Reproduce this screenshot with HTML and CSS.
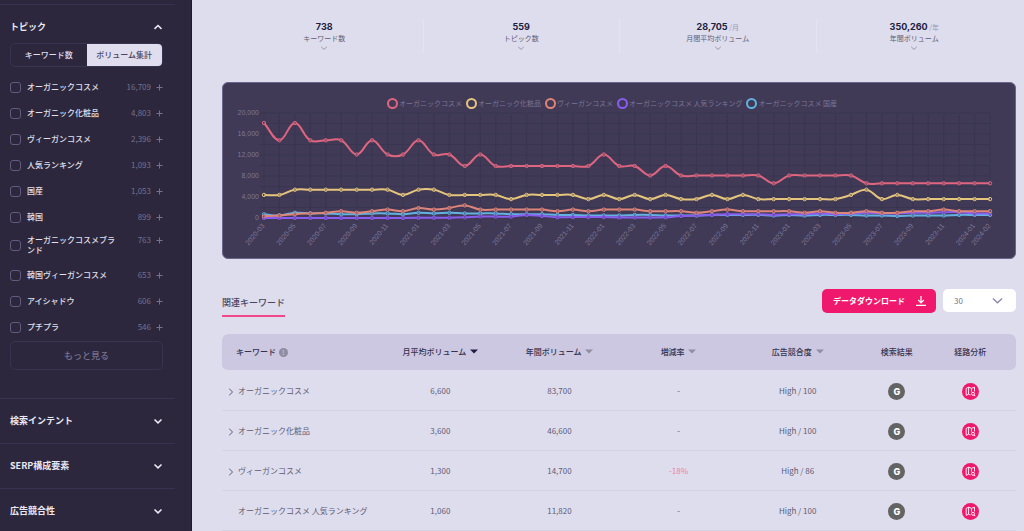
FILE: index.html
```html
<!DOCTYPE html>
<html lang="ja">
<head>
<meta charset="utf-8">
<title>関連キーワード</title>
<link rel="stylesheet" href="styles.css">
</head>
<body>
<svg class="defs" aria-hidden="true">
  <symbol id="down" viewBox="0 0 10 10"><path d="M1.5 3.5 5 6.8 8.5 3.5" fill="none" stroke="currentColor"/></symbol>
  <symbol id="up" viewBox="0 0 10 10"><path d="M1.5 6.8 5 3.5 8.5 6.8" fill="none" stroke="currentColor"/></symbol>
  <symbol id="right" viewBox="0 0 10 10"><path d="M3.2 1.8 6.6 5 3.2 8.2" fill="none" stroke="currentColor"/></symbol>
  <symbol id="plus" viewBox="0 0 7 7"><path d="M3.5 .5v6M.5 3.5h6" fill="none" stroke="currentColor"/></symbol>
  <symbol id="sort" viewBox="0 0 8 5"><path d="M0 .5h8L4 4.5z" fill="currentColor"/></symbol>
  <symbol id="map" viewBox="0 0 17 17">
    <path d="M6.6 4.2 4.2 5.3v7l2.4-1.1zM6.6 4.2l2.9 1.1 3-1.1v4.2M9.5 5.3v3.4M6.6 11.2l1.9.8" fill="none" stroke="#fff" stroke-linejoin="round" stroke-width=".9"/>
    <circle cx="11" cy="10.8" r="1.5" fill="none" stroke="#fff" stroke-width=".9"/>
    <path d="m12.1 11.9 1.2 1.3" stroke="#fff"/>
  </symbol>
</svg>
<div class="app">
  <aside class="sidebar">
    <section class="group group-open">
      <button class="group-head" type="button" aria-expanded="true"><span>トピック</span><svg class="chev"><use href="#up"/></svg></button>
      <div class="tabs">
        <button class="tab" type="button">キーワード数</button>
        <button class="tab tab-on" type="button">ボリューム集計</button>
      </div>
      <ul class="topics">
        <li class="topic"><input type="checkbox" id="t1"><label for="t1">オーガニックコスメ</label><span class="count">16,709</span><button class="plus" type="button" aria-label="追加"><svg><use href="#plus"/></svg></button></li>
        <li class="topic"><input type="checkbox" id="t2"><label for="t2">オーガニック化粧品</label><span class="count">4,803</span><button class="plus" type="button" aria-label="追加"><svg><use href="#plus"/></svg></button></li>
        <li class="topic"><input type="checkbox" id="t3"><label for="t3">ヴィーガンコスメ</label><span class="count">2,396</span><button class="plus" type="button" aria-label="追加"><svg><use href="#plus"/></svg></button></li>
        <li class="topic"><input type="checkbox" id="t4"><label for="t4">人気ランキング</label><span class="count">1,093</span><button class="plus" type="button" aria-label="追加"><svg><use href="#plus"/></svg></button></li>
        <li class="topic"><input type="checkbox" id="t5"><label for="t5">国産</label><span class="count">1,053</span><button class="plus" type="button" aria-label="追加"><svg><use href="#plus"/></svg></button></li>
        <li class="topic"><input type="checkbox" id="t6"><label for="t6">韓国</label><span class="count">899</span><button class="plus" type="button" aria-label="追加"><svg><use href="#plus"/></svg></button></li>
        <li class="topic topic-tall"><input type="checkbox" id="t7"><label for="t7">オーガニックコスメブランド</label><span class="count">763</span><button class="plus" type="button" aria-label="追加"><svg><use href="#plus"/></svg></button></li>
        <li class="topic"><input type="checkbox" id="t8"><label for="t8">韓国ヴィーガンコスメ</label><span class="count">653</span><button class="plus" type="button" aria-label="追加"><svg><use href="#plus"/></svg></button></li>
        <li class="topic"><input type="checkbox" id="t9"><label for="t9">アイシャドウ</label><span class="count">606</span><button class="plus" type="button" aria-label="追加"><svg><use href="#plus"/></svg></button></li>
        <li class="topic"><input type="checkbox" id="t10"><label for="t10">プチプラ</label><span class="count">546</span><button class="plus" type="button" aria-label="追加"><svg><use href="#plus"/></svg></button></li>
      </ul>
      <button class="more" type="button">もっと見る</button>
    </section>
    <section class="group"><button class="group-head" type="button"><span>検索インテント</span><svg class="chev"><use href="#down"/></svg></button></section>
    <section class="group"><button class="group-head" type="button"><span>SERP構成要素</span><svg class="chev"><use href="#down"/></svg></button></section>
    <section class="group"><button class="group-head" type="button"><span>広告競合性</span><svg class="chev"><use href="#down"/></svg></button></section>
  </aside>

  <main class="main">
    <div class="stats">
      <div class="stat"><div class="value"><b>738</b></div><div class="name">キーワード数</div><svg><use href="#down"/></svg></div>
      <div class="stat"><div class="value"><b>559</b></div><div class="name">トピック数</div><svg><use href="#down"/></svg></div>
      <div class="stat"><div class="value"><b>28,705</b> <span>/月</span></div><div class="name">月間平均ボリューム</div><svg><use href="#down"/></svg></div>
      <div class="stat"><div class="value"><b>350,260</b> <span>/年</span></div><div class="name">年間ボリューム</div><svg><use href="#down"/></svg></div>
    </div>

    <section class="chart">
      <ul class="legend">
        <li><i class="ring red"></i>オーガニックコスメ</li>
        <li><i class="ring yellow"></i>オーガニック化粧品</li>
        <li><i class="ring salmon"></i>ヴィーガンコスメ</li>
        <li><i class="ring purple"></i>オーガニックコスメ 人気ランキング</li>
        <li><i class="ring blue"></i>オーガニックコスメ 国産</li>
      </ul>
      <svg id="plot" class="plot" viewBox="0 0 792 149" role="img" aria-label="月別検索ボリューム"></svg>
    </section>

    <div class="toolbar">
      <h2 class="heading">関連キーワード</h2>
      <div class="actions">
        <button class="download" type="button">データダウンロード
          <svg viewBox="0 0 10 10"><path d="M5 0v6.5M2.2 4 5 6.8 7.8 4M0 9.3h10" fill="none" stroke="#fff" stroke-width="1.2"/></svg>
        </button>
        <div class="pager">
          <select aria-label="表示件数"><option>30</option></select>
          <svg><use href="#down"/></svg>
        </div>
      </div>
    </div>

    <table class="table">
      <colgroup><col class="c-key"><col class="c-num"><col class="c-num"><col class="c-num"><col class="c-num"><col class="c-search"><col></colgroup>
      <thead>
        <tr>
          <th class="first">キーワード <span class="info">!</span></th>
          <th>月平均ボリューム <svg class="sort sort-on"><use href="#sort"/></svg></th>
          <th>年間ボリューム <svg class="sort"><use href="#sort"/></svg></th>
          <th>増減率 <svg class="sort"><use href="#sort"/></svg></th>
          <th>広告競合度 <svg class="sort"><use href="#sort"/></svg></th>
          <th>検索結果</th>
          <th class="last">経路分析</th>
        </tr>
      </thead>
      <tbody>
        <tr><td class="key"><button type="button" aria-label="展開"><svg><use href="#right"/></svg></button>オーガニックコスメ</td><td>6,600</td><td>83,700</td><td>-</td><td>High / 100</td><td><a class="dot" href="#">G</a></td><td class="last"><a class="dot pink" href="#" aria-label="経路分析"><svg><use href="#map"/></svg></a></td></tr>
        <tr><td class="key"><button type="button" aria-label="展開"><svg><use href="#right"/></svg></button>オーガニック化粧品</td><td>3,600</td><td>46,600</td><td>-</td><td>High / 100</td><td><a class="dot" href="#">G</a></td><td class="last"><a class="dot pink" href="#" aria-label="経路分析"><svg><use href="#map"/></svg></a></td></tr>
        <tr><td class="key"><button type="button" aria-label="展開"><svg><use href="#right"/></svg></button>ヴィーガンコスメ</td><td>1,300</td><td>14,700</td><td class="minus">-18%</td><td>High / 86</td><td><a class="dot" href="#">G</a></td><td class="last"><a class="dot pink" href="#" aria-label="経路分析"><svg><use href="#map"/></svg></a></td></tr>
        <tr><td class="key leaf">オーガニックコスメ 人気ランキング</td><td>1,060</td><td>11,820</td><td>-</td><td>High / 100</td><td><a class="dot" href="#">G</a></td><td class="last"><a class="dot pink" href="#" aria-label="経路分析"><svg><use href="#map"/></svg></a></td></tr>
      </tbody>
    </table>
  </main>
</div>
<script src="chart.js"></script>
</body>
</html>
```
FILE: styles.css
```css
* { box-sizing: border-box; }
body {
  margin: 0;
  background: #dedded;
  color: #5f5b73;
  font: 8px/12px "Noto Sans CJK JP", sans-serif;
}
button, select, input { font: inherit; color: inherit; margin: 0; }
button { padding: 0; border: 0; background: none; cursor: pointer; }
ul { list-style: none; margin: 0; padding: 0; }
svg { display: block; }
.defs { position: absolute; width: 0; height: 0; }

.app { display: flex; height: 100vh; overflow: hidden; }

/* Sidebar */
.sidebar {
  flex: 0 0 192px;
  padding: 4px 16px 0 0;
  background: #2c273c;
  border-right: 1px solid #1f1a33;
}
.group { padding: 0 12px 0 10px; border-top: 1px solid #383350; }
.group-open { padding-bottom: 28px; }
.group-head {
  display: flex;
  align-items: center;
  justify-content: space-between;
  width: 100%;
  height: 44px;
  color: #eae8f4;
  font-size: 9px;
  font-weight: 700;
}
.group-open .group-head { height: 38px; padding-top: 6px; }
.chev { width: 10px; height: 10px; stroke-width: 1.6; }
.tabs {
  display: flex;
  height: 24px;
  border: 1px solid #383350;
  border-radius: 5px;
  overflow: hidden;
}
.tab { flex: 1; color: #dfddee; font-weight: 500; }
.tab-on { background: #dfddee; color: #4a4560; }
.topics { padding-top: 7px; }
.topic {
  display: flex;
  align-items: baseline;
  padding: 8px 0;
  line-height: 10px;
}
.topic-tall { padding: 5px 0 7px; }
.topic input {
  appearance: none;
  align-self: center;
  flex: none;
  width: 11px;
  height: 11px;
  margin: -1px 6px -1px 0;
  border: 1px solid #625b80;
  border-radius: 3px;
}
.topic label { flex: 1; padding-right: 16px; color: #e2e0ec; font-weight: 500; }
.count { color: #77718f; }
.plus {
  display: flex;
  align-items: center;
  align-self: flex-start;
  height: 10px;
  padding-left: 5px;
  color: #77718f;
}
.plus svg { width: 7px; height: 7px; }
.more {
  width: 100%;
  height: 29px;
  margin-top: 1px;
  border: 1px solid #383350;
  border-radius: 5px;
  color: #77718f;
  font-size: 9px;
  font-weight: 500;
}

/* Summary figures */
.main { flex: 1; min-width: 0; padding: 19px 8px 0 30px; }
.stats { display: grid; grid-template-columns: repeat(4, 1fr); padding: 0 4px; }
.stat {
  display: flex;
  flex-direction: column;
  align-items: center;
  height: 34px;
  padding-top: 2px;
  font-size: 7px;
}
.stat + .stat { border-left: 1px solid #e5e3f2; }
.value { color: #9a96b0; line-height: 12px; }
.value b { color: #221c40; font: 700 9px/12px Inter, sans-serif; }
.name { line-height: 11px; }
.stat svg { width: 8px; height: 8px; color: #88839d; }

/* Chart */
.chart {
  margin-top: 29px;
  padding-top: 14px;
  background: #403a57;
  border: 1px solid #6c658b;
  border-radius: 6px;
}
.legend {
  display: flex;
  justify-content: center;
  gap: 4px;
  padding-right: 14px;
  color: #7b7594;
  font-size: 7px;
}
.legend li { display: flex; align-items: center; gap: 1px; }
.ring { width: 11px; height: 11px; border: 2px solid; border-radius: 50%; }
.ring.red { color: #e06680; }
.ring.yellow { color: #e6c57c; }
.ring.salmon { color: #e08579; }
.ring.purple { color: #8b5cf0; }
.ring.blue { color: #62b1e0; }
.plot { width: 100%; height: auto; }
.plot .grid { stroke: #39344f; fill: none; }
.plot text { fill: #7d7795; font: 7px "Liberation Sans", sans-serif; text-anchor: end; }
.plot .line { fill: none; stroke-width: 2; }
.plot circle { fill: #403a57; fill-opacity: .4; stroke-width: 1; }

/* Toolbar */
.toolbar {
  display: flex;
  align-items: flex-start;
  justify-content: space-between;
  height: 45px;
  margin-top: 30px;
}
.heading {
  margin: 7px 0 0;
  padding-bottom: 5px;
  border-bottom: 2px solid #f2478a;
  color: #4a4560;
  font-size: 9px;
  font-weight: 500;
  line-height: 14px;
}
.actions { display: flex; gap: 7px; }
.download {
  display: flex;
  align-items: center;
  justify-content: space-between;
  width: 114px;
  height: 24px;
  padding: 0 10px 0 11px;
  border-radius: 5px;
  background: #f0186c;
  color: #fff;
  font-weight: 700;
}
.download svg { width: 10px; height: 10px; }
.pager { position: relative; width: 73px; }
.pager select {
  appearance: none;
  width: 100%;
  height: 23px;
  padding: 0 11px;
  border: 0;
  border-radius: 5px;
  background: #fff;
  color: #77728a;
}
.pager svg {
  position: absolute;
  top: 5px;
  right: 12px;
  width: 13px;
  height: 13px;
  color: #8a86a8;
  pointer-events: none;
}

/* Keyword table */
.table { width: 100%; table-layout: fixed; border-spacing: 0; }
.c-key { width: 20%; }
.c-num { width: 15%; }
.c-search { width: 10%; }
.table th, .table td { padding: 0; text-align: center; }
.table th {
  height: 37px;
  border-bottom: 1px solid transparent;
  background: #ccc8e1;
  background-clip: padding-box;
  color: #37324d;
  font-weight: 500;
}
.table th:first-child { border-radius: 6px 0 0 6px; }
.table th:last-child { border-radius: 0 6px 6px 0; }
.table td { height: 40px; padding-top: 1px; border-bottom: 1px solid #d3d1e4; }
.table .first { padding-left: 14px; text-align: left; }
.table .last { padding-right: 12px; }
.table .key { padding-left: 4px; text-align: left; white-space: nowrap; }
.table .leaf { padding-left: 16px; }
.key button { width: 10px; margin-right: 2px; vertical-align: middle; }
.key svg { width: 10px; height: 10px; }
.info {
  display: inline-block;
  width: 9px;
  height: 9px;
  margin-left: 1px;
  border-radius: 50%;
  background: #908da0;
  color: #ccc8e1;
  font-size: 7px;
  line-height: 9px;
  text-align: center;
}
.sort { display: inline-block; width: 8px; height: 5px; margin-left: 2px; color: #918da3; vertical-align: 1px; }
.sort-on { color: #221c40; }
.table .minus { color: #ee7d9c; }
.dot {
  display: inline-block;
  width: 17px;
  height: 17px;
  border-radius: 50%;
  background: #636363;
  color: #fff;
  font: 800 9px/17px Inter, sans-serif;
  text-decoration: none;
  vertical-align: middle;
}
.pink { background: #f0186c; }
.dot svg { width: 17px; height: 17px; }
```
FILE: chart.js
```js
const rep = (v, n) => Array(n).fill(v);

const series = [
  { color: "#62b1e0", data: [700, 500, 1000, 880, 880, 720, 720, 880, 880, 720, 1000, 880, 1000, 880, 880, 880, 720, 720, 720, 590, 590, 480, 480, 480, 590, 590, 480, 480, 480, 590, 590, 590, 590, 480, 590, 480, 590, 590, 590, 480, 480, 390, 480, 480, 480, 590, 590, 590] },
  { color: "#8b5cf0", data: [...rep(10, 10), 30, 30, 50, 140, 300, 260, 260, 590, 390, 140, 170, 170, 170, 110, 110, 110, 140, 390, 480, 590, 720, 720, 720, 590, 720, 720, 880, 720, 880, 1000, 880, 880, 1000, 1000, 1100, 1100, 880, 880] },
  { color: "#e08579", data: [320, 480, 720, 880, 1000, 1300, 1000, 1300, 1600, 1300, 1900, 1600, 1900, 2400, 1600, 1600, 1600, 1600, 1600, 1300, 1600, 1300, 1600, 1600, 1600, 1300, 1300, 1300, 1000, 1300, 1600, 1300, 1300, 1300, 1300, 1000, 1300, 1000, 1000, 1300, 1000, 1000, 1300, 1300, 1600, 1300, 1300, 1300] },
  { color: "#e6c57c", data: [4400, 4400, ...rep(5400, 7), 4400, 5400, 5400, ...rep(4400, 4), 3600, ...rep(4400, 4), 3600, 4400, 3600, 4400, 3600, 4400, 3600, 3600, 4400, 3600, 4400, ...rep(3600, 6), 4400, 5400, 3600, 4400, ...rep(3600, 6)] },
  { color: "#e06680", data: [18100, 14800, 18100, 14800, 14800, 14800, 12100, 14800, 12100, 12100, 14800, 12100, 12100, 9900, 12100, ...rep(9900, 7), 12100, 9900, 9900, 8100, 9900, ...rep(8100, 6), 6600, ...rep(8100, 5), ...rep(6600, 9)] }
];

const count = 48, left = 41, right = 767, top0 = 4, bottom = 109, max = 20000, tension = 0.4;
const x = i => left + i * (right - left) / (count - 1);
const y = v => bottom - v / max * (bottom - top0);
const f = n => n.toFixed(1);
let out = "";

for (let v = 0; v <= max; v += 2000) {
  out += `<path class="grid" d="M${left - 5} ${f(y(v))}H${right}"/>`;
  if (v % 4000 === 0) out += `<text x="${left - 5}" y="${f(y(v) + 2)}">${v.toLocaleString("en-US")}</text>`;
}
for (let i = 0; i < count; i++) {
  out += `<path class="grid" d="M${f(x(i))} ${top0}V${bottom + 5}"/>`;
  if (i % 2 === 0 || i === count - 1) {
    const month = i + 2;
    const text = `${2020 + Math.floor(month / 12)}-${String(month % 12 + 1).padStart(2, "0")}`;
    out += `<text transform="translate(${f(x(i) + 1)} ${bottom + 8}) rotate(-50)">${text}</text>`;
  }
}

for (const s of series) {
  const pts = s.data.map((v, i) => [x(i), y(v)]);
  const ctrl = pts.map((p, i) => {
    const a = pts[i - 1] || p, b = pts[i + 1] || p;
    const d1 = Math.hypot(p[0] - a[0], p[1] - a[1]), d2 = Math.hypot(b[0] - p[0], b[1] - p[1]);
    const k1 = tension * d1 / (d1 + d2), k2 = tension * d2 / (d1 + d2);
    const dx = b[0] - a[0], dy = b[1] - a[1];
    return [p[0] - k1 * dx, p[1] - k1 * dy, p[0] + k2 * dx, p[1] + k2 * dy];
  });
  let d = `M${f(pts[0][0])} ${f(pts[0][1])}`;
  for (let i = 1; i < pts.length; i++) {
    d += `C${f(ctrl[i - 1][2])} ${f(ctrl[i - 1][3])} ${f(ctrl[i][0])} ${f(ctrl[i][1])} ${f(pts[i][0])} ${f(pts[i][1])}`;
  }
  out += `<path class="line" stroke="${s.color}" d="${d}"/>`;
  for (const p of pts) out += `<circle stroke="${s.color}" cx="${f(p[0])}" cy="${f(p[1])}" r="1.7"/>`;
}
document.getElementById("plot").innerHTML = out;
```
